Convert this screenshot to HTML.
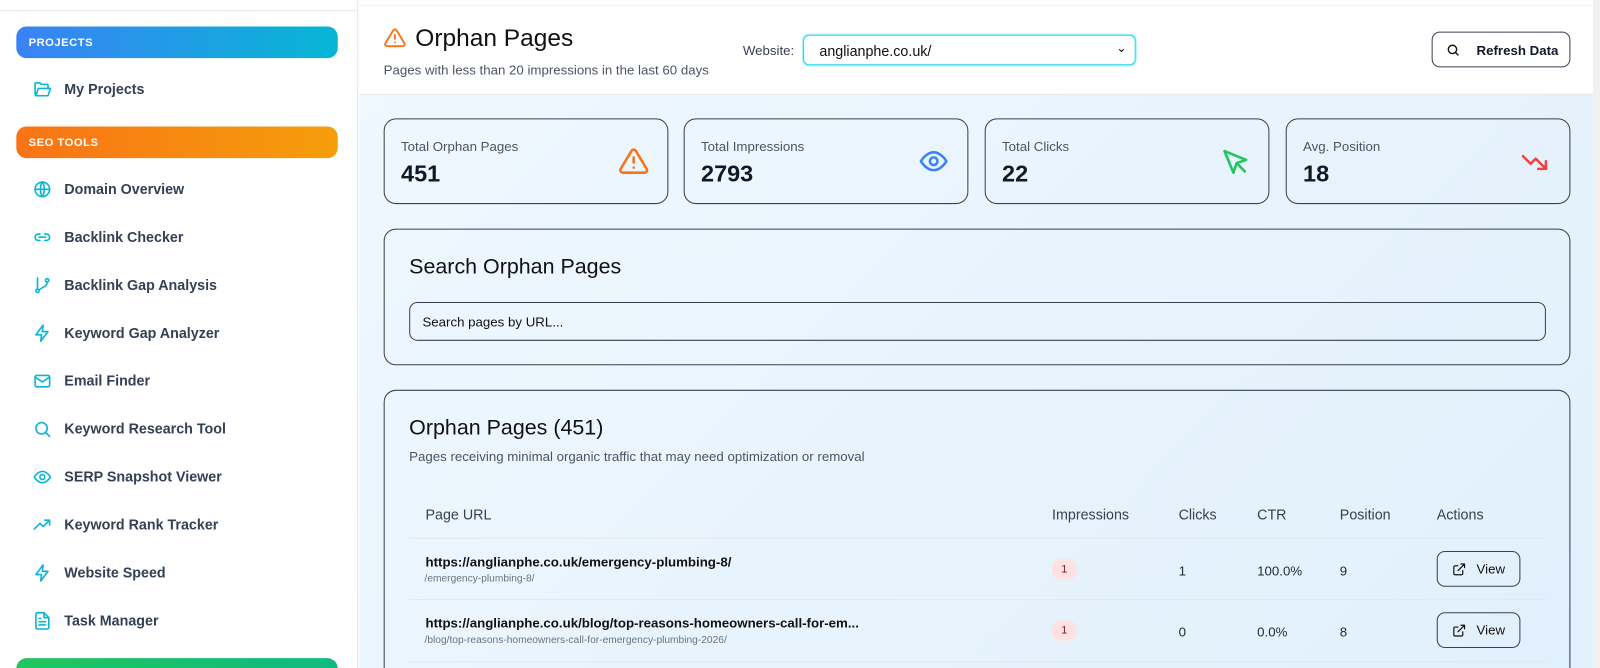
<!DOCTYPE html>
<html><head><meta charset="utf-8"><style>
*{box-sizing:border-box;margin:0;padding:0}
body{width:1600px;height:668px;overflow:hidden;font-family:"Liberation Sans",sans-serif;background:#fff;position:relative;color:#111827}
#w{position:absolute;left:0;top:0;width:1568px;height:655px;transform:scale(1.020408);transform-origin:0 0;overflow:hidden}
.sb{position:absolute;left:0;top:0;width:351px;height:668px;background:#fff;border-right:1px solid #e5e7eb}
.sb .topline{position:absolute;left:0;top:10px;width:351px;border-top:1px solid #e5e7eb}
.pill{position:absolute;left:16px;width:315px;height:31px;border-radius:10px;color:#fff;font-weight:bold;font-size:11px;letter-spacing:.5px;padding:10px 0 0 12px}
.item{position:absolute;left:32px;height:24px;display:flex;align-items:center;font-weight:bold;font-size:14px;color:#334155}
.item svg{width:19px;height:19px;margin-right:12px;stroke:#06b6d4;fill:none;stroke-width:2;stroke-linecap:round;stroke-linejoin:round}
.main{position:absolute;left:352px;top:0;width:1209px;height:668px;background:linear-gradient(135deg,#f0f8fe,#e0f0fc)}
.hdr{position:absolute;left:0;top:0;width:1209px;height:93px;background:#fff;border-bottom:1px solid #e5e7eb}
.hdr .tl{position:absolute;left:0;top:5px;width:1209px;border-top:1px solid #eef0f2}
.card{position:absolute;border:1px solid #374151;border-radius:12px}
.stat .l{position:absolute;left:16px;top:19px;font-size:13px;color:#4b5563}
.stat .v{position:absolute;left:16px;top:40px;font-size:23px;font-weight:bold;color:#111827}
.stat svg{position:absolute;right:18px;top:26px;width:30px;height:30px;fill:none;stroke-width:2;stroke-linecap:round;stroke-linejoin:round}
.th{position:absolute;top:496px;font-size:14px;color:#374151}
.td{position:absolute;font-size:13px;color:#1f2937}
.badge{position:absolute;width:24px;height:20px;border-radius:8px;background:#fde2e2;font-size:11px;color:#7f1d1d;text-align:center;line-height:20px}
.btn{position:absolute;width:82px;height:35px;border:1px solid #374151;border-radius:8px;font-size:13px;padding:9px 0 0 38px;color:#111}
.btn svg{position:absolute;left:14px;top:10px;width:14px;height:14px;stroke:#111;fill:none;stroke-width:2;stroke-linecap:round;stroke-linejoin:round}
</style></head><body><div id="w">
<div class="sb">
<div class="topline"></div>
<div class="pill" style="top:26px;background:linear-gradient(90deg,#3b82f6,#06b6d4)">PROJECTS</div>
<div class="item" style="top:75px"><svg viewBox="0 0 24 24"><path d="M3 7v11a2 2 0 002 2h14l3-9H7L4 20"/><path d="M3 7V5a1 1 0 011-1h5l2 2h7a1 1 0 011 1v4"/></svg>My Projects</div>
<div class="pill" style="top:124px;background:linear-gradient(90deg,#f97316,#f59e0b)">SEO TOOLS</div>
<div class="item" style="top:173px"><svg viewBox="0 0 24 24"><circle cx="12" cy="12" r="9"/><path d="M3 12h18M12 3c3 3 3 15 0 18M12 3c-3 3-3 15 0 18"/></svg>Domain Overview</div>
<div class="item" style="top:220px"><svg viewBox="0 0 24 24"><path d="M9 8H7a4 4 0 000 8h2M15 8h2a4 4 0 010 8h-2M8 12h8"/></svg>Backlink Checker</div>
<div class="item" style="top:267px"><svg viewBox="0 0 24 24"><circle cx="6" cy="19" r="2"/><circle cx="18" cy="6" r="2"/><path d="M6 3v14M18 8c0 6-6 6-10 10"/></svg>Backlink Gap Analysis</div>
<div class="item" style="top:314px"><svg viewBox="0 0 24 24"><path d="M13 2L4 14h7l-1 8 9-12h-7z"/></svg>Keyword Gap Analyzer</div>
<div class="item" style="top:361px"><svg viewBox="0 0 24 24"><rect x="3" y="5" width="18" height="14" rx="2"/><path d="M3 7l9 6 9-6"/></svg>Email Finder</div>
<div class="item" style="top:408px"><svg viewBox="0 0 24 24"><circle cx="11" cy="11" r="7"/><path d="M21 21l-5-5"/></svg>Keyword Research Tool</div>
<div class="item" style="top:455px"><svg viewBox="0 0 24 24"><path d="M2 12s4-7 10-7 10 7 10 7-4 7-10 7S2 12 2 12z"/><circle cx="12" cy="12" r="3"/></svg>SERP Snapshot Viewer</div>
<div class="item" style="top:502px"><svg viewBox="0 0 24 24"><path d="M2 17l7-7 4 4 8-8M15 6h6v6"/></svg>Keyword Rank Tracker</div>
<div class="item" style="top:549px"><svg viewBox="0 0 24 24"><path d="M13 2L4 14h7l-1 8 9-12h-7z"/></svg>Website Speed</div>
<div class="item" style="top:596px"><svg viewBox="0 0 24 24"><path d="M14 2H6a2 2 0 00-2 2v16a2 2 0 002 2h12a2 2 0 002-2V8z"/><path d="M14 2v6h6M8 13h8M8 17h8M8 9h2"/></svg>Task Manager</div>
<div class="pill" style="top:645px;background:linear-gradient(90deg,#22c55e,#10b981)"></div>
</div>
<div style="position:absolute;left:1561px;top:0;width:7px;height:668px;background:#f1f1f1"></div>
<div class="main">
<div class="hdr"><div class="tl"></div>
<svg style="position:absolute;left:24px;top:26px" width="22" height="22" viewBox="0 0 24 24" fill="none" stroke="#f97316" stroke-width="2" stroke-linecap="round" stroke-linejoin="round"><path d="M10.3 3.9L1.8 18a2 2 0 001.7 3h17a2 2 0 001.7-3L13.7 3.9a2 2 0 00-3.4 0z"/><path d="M12 9v4M12 17h.01"/></svg>
<div style="position:absolute;left:55px;top:24px;font-size:24px;color:#111">Orphan Pages</div>
<div style="position:absolute;left:24px;top:61px;font-size:13px;color:#4b5563">Pages with less than 20 impressions in the last 60 days</div>
<div style="position:absolute;left:376px;top:42px;font-size:13px;color:#374151">Website:</div>
<div style="position:absolute;left:435px;top:34px;width:326px;height:30px;border:1px solid #22d3ee;border-radius:6px;box-shadow:0 0 0 1px #a5f3fc;font-size:14px;padding:7px 0 0 15px;color:#111">anglianphe.co.uk/<span style="position:absolute;right:8px;top:5px;font-size:12px">&#8964;</span></div>
<div style="position:absolute;left:1051px;top:31px;width:136px;height:35px;border:1px solid #374151;border-radius:8px;font-size:13px;font-weight:bold;padding:10px 0 0 43px">Refresh Data
<svg style="position:absolute;left:13px;top:10px" width="14" height="14" viewBox="0 0 24 24" fill="none" stroke="#111" stroke-width="2.4"><circle cx="11" cy="11" r="7"/><path d="M21 21l-5-5"/></svg></div>
</div>
<div class="card stat" style="left:24px;top:116px;width:279px;height:84px"><div class="l">Total Orphan Pages</div><div class="v">451</div><svg viewBox="0 0 24 24" stroke="#f97316"><path d="M10.3 3.9L1.8 18a2 2 0 001.7 3h17a2 2 0 001.7-3L13.7 3.9a2 2 0 00-3.4 0z"/><path d="M12 9v4M12 17h.01"/></svg></div>
<div class="card stat" style="left:318px;top:116px;width:279px;height:84px"><div class="l">Total Impressions</div><div class="v">2793</div><svg viewBox="0 0 24 24" stroke="#3b82f6"><path d="M2 12s4-7 10-7 10 7 10 7-4 7-10 7S2 12 2 12z"/><circle cx="12" cy="12" r="3"/></svg></div>
<div class="card stat" style="left:613px;top:116px;width:279px;height:84px"><div class="l">Total Clicks</div><div class="v">22</div><svg viewBox="0 0 24 24" stroke="#22c55e"><path d="M4 4l7 17 2.5-7.5L21 11z"/><path d="M14 14l6 6"/></svg></div>
<div class="card stat" style="left:908px;top:116px;width:279px;height:84px"><div class="l">Avg. Position</div><div class="v">18</div><svg viewBox="0 0 24 24" stroke="#ef4444"><path d="M2 8l6 6 4-4 8 8M14 18h6v-6"/></svg></div>
<div class="card" style="left:24px;top:224px;width:1163px;height:134px">
<div style="position:absolute;left:24px;top:25px;font-size:21px;color:#111">Search Orphan Pages</div>
<div style="position:absolute;left:24px;top:71px;width:1114px;height:38px;border:1px solid #374151;border-radius:8px;font-size:13px;padding:11px 0 0 12px;color:#111">Search pages by URL...</div>
</div>
<div class="card" style="left:24px;top:382px;width:1163px;height:300px">
<div style="position:absolute;left:24px;top:25px;font-size:21px;color:#111">Orphan Pages (451)</div>
<div style="position:absolute;left:24px;top:57px;font-size:13px;color:#4b5563">Pages receiving minimal organic traffic that may need optimization or removal</div>
<div style="position:absolute;left:24px;top:144px;width:1114px;border-top:1px solid #e5e7eb"></div>
<div style="position:absolute;left:24px;top:204px;width:1114px;border-top:1px solid #e5e7eb"></div>
<div style="position:absolute;left:24px;top:265px;width:1114px;border-top:1px solid #e5e7eb"></div>
</div>
<div class="th" style="left:65px">Page URL</div>
<div class="th" style="left:679px">Impressions</div>
<div class="th" style="left:803px">Clicks</div>
<div class="th" style="left:880px">CTR</div>
<div class="th" style="left:961px">Position</div>
<div class="th" style="left:1056px">Actions</div>
<div class="td" style="left:65px;top:543px;font-weight:bold;color:#111">https://anglianphe.co.uk/emergency-plumbing-8/</div>
<div class="td" style="left:64px;top:562px;font-size:10px;color:#6b7280">/emergency-plumbing-8/</div>
<div class="badge" style="left:679px;top:548px">1</div>
<div class="td" style="left:803px;top:552px">1</div><div class="td" style="left:880px;top:552px">100.0%</div><div class="td" style="left:961px;top:552px">9</div>
<div class="btn" style="left:1056px;top:540px"><svg viewBox="0 0 24 24"><path d="M18 14v5a2 2 0 01-2 2H5a2 2 0 01-2-2V8a2 2 0 012-2h5M15 3h6v6M10 14L21 3"/></svg>View</div>
<div class="td" style="left:65px;top:603px;font-weight:bold;color:#111">https://anglianphe.co.uk/blog/top-reasons-homeowners-call-for-em...</div>
<div class="td" style="left:64px;top:622px;font-size:10px;color:#6b7280">/blog/top-reasons-homeowners-call-for-emergency-plumbing-2026/</div>
<div class="badge" style="left:679px;top:608px">1</div>
<div class="td" style="left:803px;top:612px">0</div><div class="td" style="left:880px;top:612px">0.0%</div><div class="td" style="left:961px;top:612px">8</div>
<div class="btn" style="left:1056px;top:600px"><svg viewBox="0 0 24 24"><path d="M18 14v5a2 2 0 01-2 2H5a2 2 0 01-2-2V8a2 2 0 012-2h5M15 3h6v6M10 14L21 3"/></svg>View</div>
</div>
</div></body></html>
